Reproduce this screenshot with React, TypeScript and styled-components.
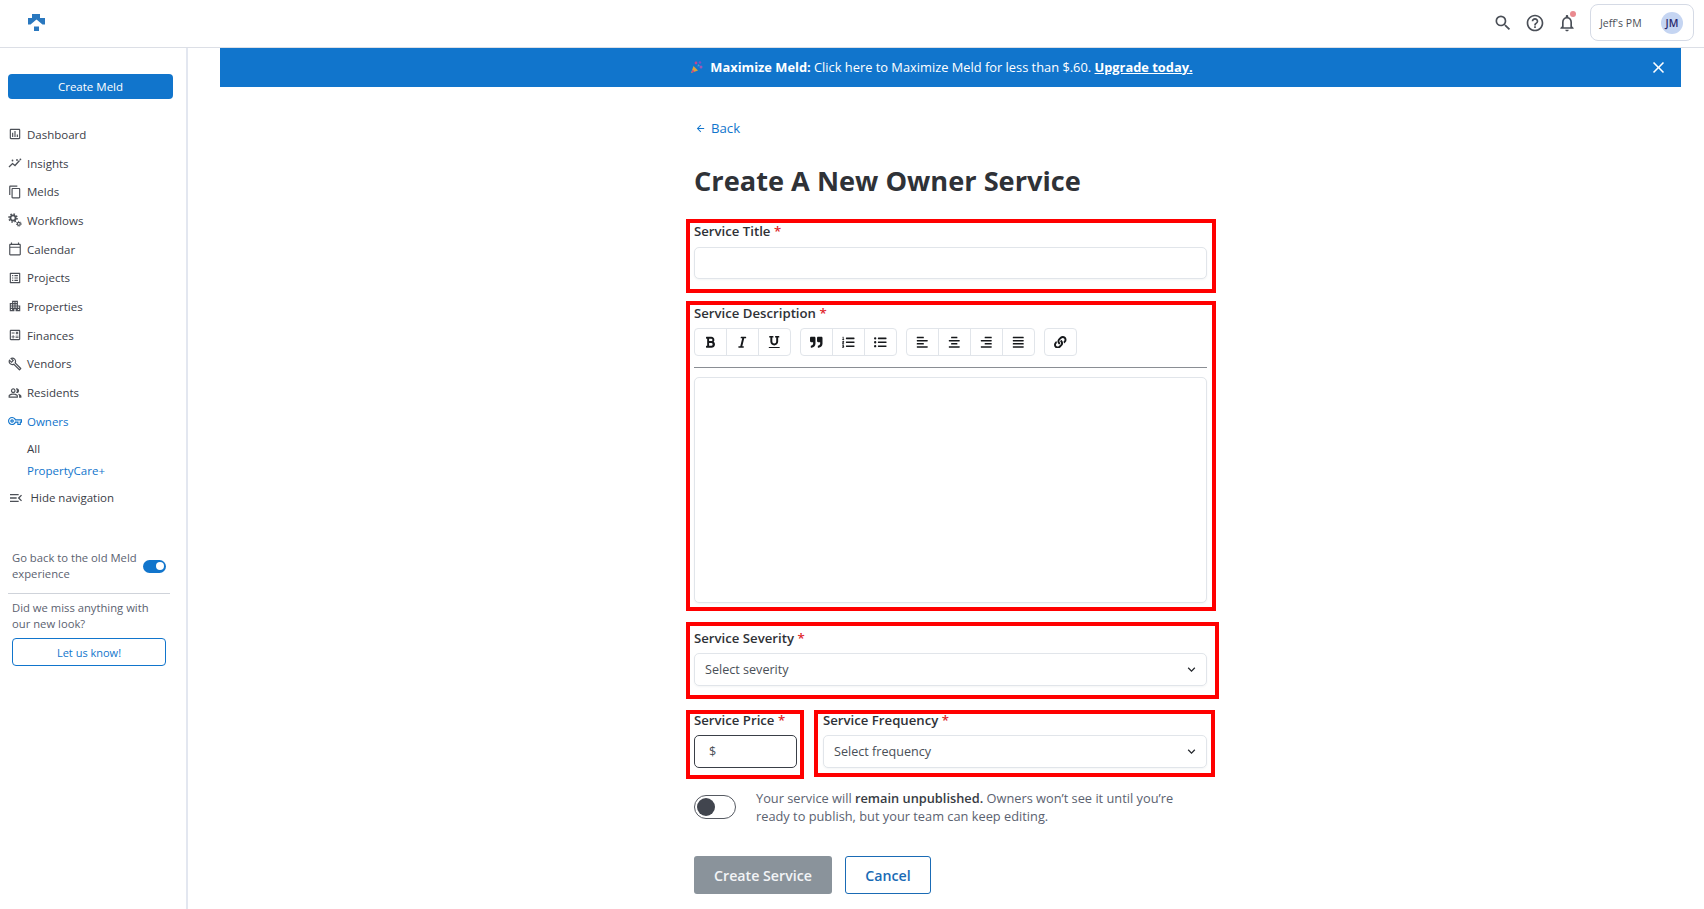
import React from "react";
import styled, { createGlobalStyle } from "styled-components";
import {
  MdOutlineAssessment,
  MdOutlineContentCopy,
  MdOutlineCalendarToday,
  MdOutlineListAlt,
  MdApartment,
  MdOutlineCalculate,
  MdOutlineBuild,
  MdOutlinePeopleAlt,
  MdOutlineVpnKey,
  MdMenuOpen,
  MdSearch,
  MdHelpOutline,
  MdOutlineNotifications,
  MdClose,
  MdArrowBack,
  MdKeyboardArrowDown,
} from "react-icons/md";
import {
  FaBold,
  FaItalic,
  FaUnderline,
  FaQuoteRight,
  FaListOl,
  FaListUl,
  FaAlignLeft,
  FaAlignCenter,
  FaAlignRight,
  FaAlignJustify,
  FaLink,
} from "react-icons/fa";

const BLUE = "#1175cc";

const GlobalStyle = createGlobalStyle`
  html, body {
    margin: 0;
    padding: 0;
    height: 909px;
    overflow: hidden;
    background: #fff;
    font-family: "Open Sans", "Noto Sans", sans-serif;
    color: #373b42;
  }
  * { box-sizing: border-box; }
`;

const Page = styled.div`
  width: 1704px;
  height: 909px;
  display: flex;
  flex-direction: column;
`;

const Header = styled.header`
  height: 48px;
  flex: none;
  display: flex;
  align-items: center;
  justify-content: space-between;
  border-bottom: 1px solid #dcdfe6;
  padding: 0 10px 2px 28px;
`;

const HeaderRight = styled.div`
  display: flex;
  align-items: center;
`;

const HeaderIcon = styled.span`
  display: flex;
  position: relative;
  margin-right: 12px;
  color: #4a4f57;
  font-size: 20px;
`;

const NotifyDot = styled.span`
  position: absolute;
  top: -2px;
  right: 1px;
  width: 6px;
  height: 6px;
  border-radius: 50%;
  background: #ea8a8f;
`;

const Account = styled.div`
  width: 104px;
  height: 37px;
  margin-left: 1px;
  border: 1px solid #d5dae5;
  border-radius: 8px;
  display: flex;
  align-items: center;
  justify-content: space-between;
  padding: 0 10px 0 9px;
  font-size: 10.5px;
  color: #4a4f57;
`;

const Avatar = styled.span`
  width: 22px;
  height: 22px;
  border-radius: 50%;
  background: #c5d5f2;
  color: #2b2a6e;
  font-size: 10.5px;
  font-weight: 600;
  display: flex;
  align-items: center;
  justify-content: center;
`;

const Body = styled.div`
  flex: 1;
  display: flex;
  min-height: 0;
`;

const Sidebar = styled.aside`
  width: 188px;
  flex: none;
  border-right: 2px solid #e3e7f0;
  padding: 26px 13px 0 8px;
`;

const PrimaryButton = styled.button`
  width: 165px;
  height: 25px;
  border: 0;
  border-radius: 4px;
  background: ${BLUE};
  color: #fff;
  font: 400 11.5px "Open Sans", sans-serif;
  display: block;
`;

const Nav = styled.nav`
  margin-top: 21px;
`;

const NavItem = styled.div<{ $active?: boolean }>`
  height: 28.7px;
  display: flex;
  align-items: center;
  font-size: 11.5px;
  color: ${(p) => (p.$active ? BLUE : "#3b4048")};
`;

const NavIcon = styled.span`
  width: 19px;
  display: flex;
  font-size: 14px;
  color: #4c5057;
`;

const OwnerIcon = styled(NavIcon)`
  color: ${BLUE};
`;

const SubItem = styled.div<{ $active?: boolean }>`
  height: 22px;
  padding-left: 19px;
  display: flex;
  align-items: center;
  font-size: 11.5px;
  color: ${(p) => (p.$active ? BLUE : "#3b4048")};
`;

const SubList = styled.div`
  padding-top: 2px;
`;

const HideNav = styled(NavItem)`
  margin-top: 2px;
`;

const HideIcon = styled(NavIcon)`
  width: 22.5px;
  font-size: 16px;
`;

const Extras = styled.div`
  margin-top: 38px;
  padding-left: 4px;
  font-size: 11.25px;
  line-height: 16px;
  color: #5b6270;
  width: 158px;
`;

const OldRow = styled.div`
  display: flex;
  align-items: center;
  justify-content: space-between;
`;

const OldText = styled.div`
  width: 130px;
`;

const BlueSwitch = styled.span`
  width: 23px;
  height: 13px;
  border-radius: 7px;
  background: ${BLUE};
  position: relative;
  flex: none;
  &::after {
    content: "";
    position: absolute;
    top: 2.5px;
    right: 2.5px;
    width: 8px;
    height: 8px;
    border-radius: 50%;
    background: #fff;
  }
`;

const Divider = styled.div`
  height: 1px;
  background: #cfd3da;
  margin: 11px 0 6px -4px;
  width: 162px;
`;

const OutlineSmall = styled.button`
  display: block;
  width: 154px;
  height: 28px;
  margin-top: 6px;
  border: 1px solid ${BLUE};
  border-radius: 4px;
  background: #fff;
  color: ${BLUE};
  font: 400 11px "Open Sans", sans-serif;
`;

const Main = styled.main`
  flex: 1;
  min-width: 0;
  padding: 0 23px 0 32px;
`;

const Banner = styled.div`
  height: 39px;
  padding: 0 18px 2px 0;
  background: ${BLUE};
  color: #fff;
  font-size: 12.85px;
  display: flex;
  align-items: center;
  justify-content: center;
  position: relative;
  white-space: pre;
`;

const Party = styled.svg`
  width: 14px;
  height: 14px;
  margin-right: 6px;
  flex: none;
`;

const BannerLink = styled.b`
  font-weight: 700;
  text-decoration: underline;
`;

const BannerClose = styled.span`
  position: absolute;
  right: 13px;
  top: 10px;
  display: flex;
  font-size: 19px;
`;

const Column = styled.div`
  width: 513px;
  margin: 0 auto;
`;

const BackLink = styled.a`
  display: flex;
  align-items: center;
  height: 20px;
  margin-top: 31px;
  font-size: 13.2px;
  font-weight: 500;
  color: ${BLUE};
`;

const BackIcon = styled.span`
  display: flex;
  font-size: 11px;
  width: 17px;
  padding-left: 1px;
`;

const Title = styled.h1`
  margin: 24px 0 0;
  height: 38px;
  line-height: 38px;
  font-size: 27.2px;
  font-weight: 700;
  color: #2f3237;
`;

const Field = styled.div<{ $outset: string; $gap?: number }>`
  position: relative;
  margin-top: ${(p) => p.$gap ?? 0}px;
  &::after {
    content: "";
    position: absolute;
    inset: ${(p) => p.$outset};
    border: 4px solid #ff0000;
    pointer-events: none;
  }
`;

const Label = styled.label`
  display: block;
  height: 18px;
  line-height: 18px;
  font-size: 13.2px;
  font-weight: 600;
  color: #2f3237;
`;

const Star = styled.span`
  color: #e0242b;
`;

const TextBox = styled.div<{ $height: number }>`
  height: ${(p) => p.$height}px;
  border: 1px solid #e1e5ea;
  border-radius: 5px;
  box-shadow: 0 1px 2px rgba(30, 50, 80, 0.05);
  background: #fff;
`;

const TitleBox = styled(TextBox)`
  margin-top: 7px;
`;

const Toolbar = styled.div`
  display: flex;
  gap: 9px;
  margin-top: 6px;
  padding-bottom: 11px;
  border-bottom: 1px solid #8a8e94;
`;

const ToolGroup = styled.div`
  display: flex;
`;

const ToolButton = styled.span`
  width: 33px;
  height: 28px;
  margin-left: -1px;
  border: 1px solid #e1e5ea;
  display: flex;
  align-items: center;
  justify-content: center;
  font-size: 12.5px;
  color: #16181b;
  &:first-child {
    margin-left: 0;
    border-radius: 4px 0 0 4px;
  }
  &:last-child {
    border-radius: 0 4px 4px 0;
  }
  &:only-child {
    border-radius: 4px;
  }
`;

const EditorBox = styled(TextBox)`
  margin-top: 9px;
`;

const SelectBox = styled.div`
  height: 33px;
  margin-top: 6px;
  padding: 0 7px 0 10px;
  border: 1px solid #e1e5ea;
  border-radius: 5px;
  box-shadow: 0 1px 2px rgba(30, 50, 80, 0.05);
  display: flex;
  align-items: center;
  justify-content: space-between;
  font-size: 12.6px;
  color: #4a4f57;
`;

const Chevron = styled.span`
  display: flex;
  font-size: 15px;
  color: #26292e;
`;

const PriceRow = styled.div`
  display: flex;
  gap: 26px;
  margin-top: 25px;
`;

const PriceField = styled(Field)`
  width: 103px;
  flex: none;
`;

const FrequencyField = styled(Field)`
  flex: 1;
`;

const PriceInput = styled.div`
  height: 33px;
  margin-top: 6px;
  padding-left: 14px;
  border: 1px solid #3a3f47;
  border-radius: 5px;
  display: flex;
  align-items: center;
  font-size: 12.6px;
  color: #4a4f57;
`;

const PublishRow = styled.div`
  display: flex;
  align-items: center;
  margin-top: 21px;
`;

const DarkSwitch = styled.span`
  width: 42px;
  height: 24px;
  flex: none;
  border: 1px solid #565a62;
  border-radius: 12px;
  position: relative;
  &::after {
    content: "";
    position: absolute;
    top: 2px;
    left: 2px;
    width: 18px;
    height: 18px;
    border-radius: 50%;
    background: #41454e;
  }
`;

const PublishText = styled.p`
  margin: 0 0 0 20px;
  width: 440px;
  font-size: 12.8px;
  line-height: 18px;
  color: #5b6270;
`;

const Strong = styled.b`
  font-weight: 600;
  color: #373b42;
`;

const Actions = styled.div`
  display: flex;
  gap: 13px;
  margin-top: 31px;
`;

const SubmitButton = styled.button`
  width: 138px;
  height: 38px;
  border: 0;
  border-radius: 3px;
  background: #8a939b;
  color: #f2f4f6;
  font: 600 14.2px "Open Sans", sans-serif;
`;

const CancelButton = styled.button`
  width: 86px;
  height: 38px;
  border: 1px solid #1a6bb5;
  border-radius: 3px;
  background: #fff;
  color: #1a6bb5;
  font: 600 14.2px "Open Sans", sans-serif;
`;

const InsightsIcon = () => (
  <svg width="1em" height="1em" viewBox="0 0 14 14" fill="none" stroke="currentColor">
    <path d="M1 11l3.5-3.5 2.5 2 4.5-5" strokeWidth="1.3" />
    <circle cx="4.5" cy="4.5" r="0.9" fill="currentColor" stroke="none" />
    <circle cx="9" cy="4" r="0.9" fill="currentColor" stroke="none" />
    <circle cx="12.4" cy="3.4" r="0.9" fill="currentColor" stroke="none" />
  </svg>
);

const WorkflowIcon = () => (
  <svg width="1em" height="1em" viewBox="0 0 14 14" fill="none" stroke="currentColor">
    <circle cx="5" cy="5" r="2.6" strokeWidth="1.8" />
    <circle cx="5" cy="5" r="4" strokeWidth="1.6" strokeDasharray="1.5 1.64" />
    <circle cx="10.8" cy="10.8" r="1.5" strokeWidth="1.2" />
    <circle cx="10.8" cy="10.8" r="2.4" strokeWidth="1" strokeDasharray="1 0.88" />
  </svg>
);

const navItems: [string, React.ReactNode][] = [
  ["Dashboard", <MdOutlineAssessment />],
  ["Insights", <InsightsIcon />],
  ["Melds", <MdOutlineContentCopy />],
  ["Workflows", <WorkflowIcon />],
  ["Calendar", <MdOutlineCalendarToday />],
  ["Projects", <MdOutlineListAlt />],
  ["Properties", <MdApartment />],
  ["Finances", <MdOutlineCalculate />],
  ["Vendors", <MdOutlineBuild />],
  ["Residents", <MdOutlinePeopleAlt />],
];

const toolGroups: React.ReactNode[][] = [
  [<FaBold />, <FaItalic />, <FaUnderline />],
  [<FaQuoteRight />, <FaListOl />, <FaListUl />],
  [<FaAlignLeft />, <FaAlignCenter />, <FaAlignRight />, <FaAlignJustify />],
  [<FaLink />],
];

const Logo = () => (
  <svg width="17" height="17" viewBox="0 0 17 17">
    <path d="M4 0h8v4h5v6.5h-2.5L8.5 5.5 2.5 10.5H0V4h4z" fill="#2a78bf" />
    <rect x="6" y="12.5" width="5" height="4.5" fill="#2a78bf" />
  </svg>
);

const FieldLabel = ({ text }: { text: string }) => (
  <Label>
    {text} <Star>*</Star>
  </Label>
);

const App = () => (
  <Page>
    <GlobalStyle />
    <Header>
      <Logo />
      <HeaderRight>
        <HeaderIcon>
          <MdSearch />
        </HeaderIcon>
        <HeaderIcon>
          <MdHelpOutline />
        </HeaderIcon>
        <HeaderIcon>
          <MdOutlineNotifications />
          <NotifyDot />
        </HeaderIcon>
        <Account>
          Jeff's PM
          <Avatar>JM</Avatar>
        </Account>
      </HeaderRight>
    </Header>
    <Body>
      <Sidebar>
        <PrimaryButton>Create Meld</PrimaryButton>
        <Nav>
          {navItems.map(([label, icon]) => (
            <NavItem key={label}>
              <NavIcon>{icon}</NavIcon>
              {label}
            </NavItem>
          ))}
          <NavItem $active>
            <OwnerIcon>
              <MdOutlineVpnKey />
            </OwnerIcon>
            Owners
          </NavItem>
          <SubList>
            <SubItem>All</SubItem>
            <SubItem $active>PropertyCare+</SubItem>
          </SubList>
          <HideNav>
            <HideIcon>
              <MdMenuOpen />
            </HideIcon>
            Hide navigation
          </HideNav>
        </Nav>
        <Extras>
          <OldRow>
            <OldText>Go back to the old Meld experience</OldText>
            <BlueSwitch />
          </OldRow>
          <Divider />
          Did we miss anything with our new look?
          <OutlineSmall>Let us know!</OutlineSmall>
        </Extras>
      </Sidebar>
      <Main>
        <Banner>
          <Party viewBox="0 0 14 14">
            <path d="M1 13l2.5-7 4.5 4.5z" fill="#d9a23b" />
            <path d="M2.5 9.5l2 2-3 1.5z" fill="#c2458f" />
            <circle cx="6" cy="3" r="1.4" fill="#c2458f" />
            <circle cx="10" cy="2.5" r="1.3" fill="#7d4fc4" />
            <circle cx="11" cy="7" r="1.5" fill="#9b59b6" />
            <path d="M8 4l2 2-2.5 0.5z" fill="#3fa0d8" />
          </Party>
          <b>Maximize Meld:</b> Click here to Maximize Meld for less than $.60.{" "}
          <BannerLink>Upgrade today.</BannerLink>
          <BannerClose>
            <MdClose />
          </BannerClose>
        </Banner>
        <Column>
          <BackLink>
            <BackIcon>
              <MdArrowBack />
            </BackIcon>
            Back
          </BackLink>
          <Title>Create A New Owner Service</Title>
          <Field $outset="-3px -9px -14px -8px" $gap={22}>
            <FieldLabel text="Service Title" />
            <TitleBox $height={32} />
          </Field>
          <Field $outset="-3px -9px -8px -8px" $gap={25}>
            <FieldLabel text="Service Description" />
            <Toolbar>
              {toolGroups.map((group, i) => (
                <ToolGroup key={i}>
                  {group.map((icon, j) => (
                    <ToolButton key={j}>{icon}</ToolButton>
                  ))}
                </ToolGroup>
              ))}
            </Toolbar>
            <EditorBox $height={226} />
          </Field>
          <Field $outset="-7px -12px -13px -8px" $gap={26}>
            <FieldLabel text="Service Severity" />
            <SelectBox>
              Select severity
              <Chevron>
                <MdKeyboardArrowDown />
              </Chevron>
            </SelectBox>
          </Field>
          <PriceRow>
            <PriceField $outset="-1px -7px -11px -8px">
              <FieldLabel text="Service Price" />
              <PriceInput>$</PriceInput>
            </PriceField>
            <FrequencyField $outset="-1px -8px -9px -9px">
              <FieldLabel text="Service Frequency" />
              <SelectBox>
                Select frequency
                <Chevron>
                  <MdKeyboardArrowDown />
                </Chevron>
              </SelectBox>
            </FrequencyField>
          </PriceRow>
          <PublishRow>
            <DarkSwitch />
            <PublishText>
              Your service will <Strong>remain unpublished.</Strong> Owners won’t
              see it until you’re ready to publish, but your team can keep editing.
            </PublishText>
          </PublishRow>
          <Actions>
            <SubmitButton>Create Service</SubmitButton>
            <CancelButton>Cancel</CancelButton>
          </Actions>
        </Column>
      </Main>
    </Body>
  </Page>
);

export default App;
